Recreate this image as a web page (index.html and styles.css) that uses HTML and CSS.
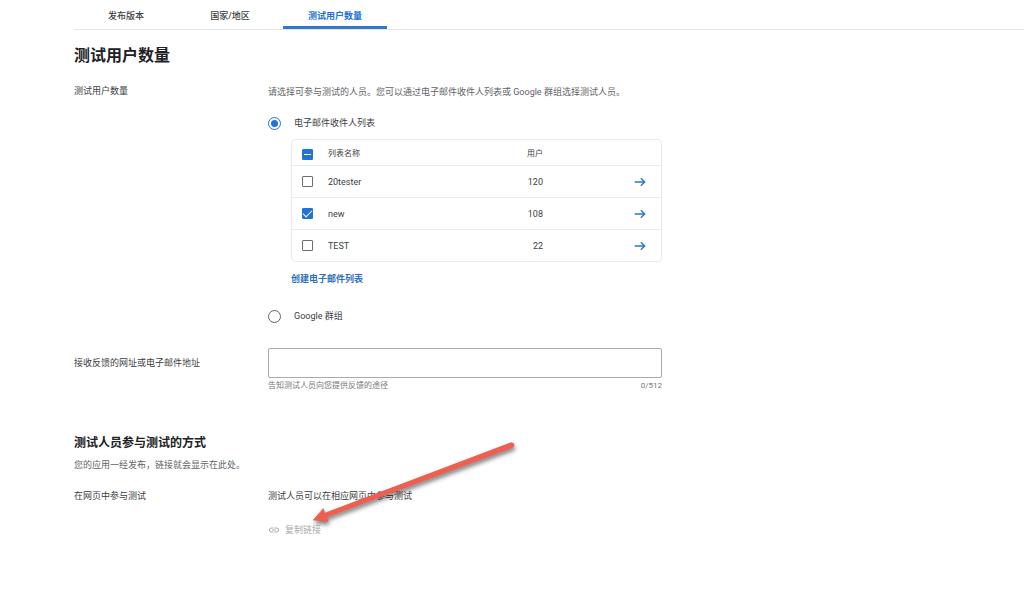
FILE: index.html
```html
<!DOCTYPE html>
<html lang="zh-CN">
<head>
<meta charset="utf-8">
<meta name="viewport" content="width=device-width, initial-scale=1">
<title>测试用户数量</title>
<link rel="stylesheet" href="styles.css">
</head>
<body>
<main class="page">
  <nav class="tabs">
    <a class="tab" href="#releases">发布版本</a>
    <a class="tab" href="#countries">国家/地区</a>
    <a class="tab tab-active" href="#testers" aria-current="page">测试用户数量</a>
  </nav>

  <section class="section" id="testers">
    <h1 class="title">测试用户数量</h1>
    <div class="row">
      <div class="label">测试用户数量</div>
      <div class="field">
        <p class="intro">请选择可参与测试的人员。您可以通过电子邮件收件人列表或 Google 群组选择测试人员。</p>
        <label class="option"><input class="radio" type="radio" name="source" checked>电子邮件收件人列表</label>
        <div class="lists">
          <div class="card">
            <table class="table">
              <thead>
                <tr>
                  <th class="pick"><input class="check check-mixed" type="checkbox" aria-label="全选"></th>
                  <th class="name">列表名称</th>
                  <th class="users">用户</th>
                  <th class="open"></th>
                </tr>
              </thead>
              <tbody>
                <tr>
                  <td class="pick"><input class="check" type="checkbox" id="list-1"></td>
                  <td class="name"><label for="list-1">20tester</label></td>
                  <td class="users">120</td>
                  <td class="open"><a class="go" href="#list-1" aria-label="20tester"><svg class="go-icon" viewBox="0 0 12 12"><path d="M0.7 6H10.6M6.9 2.2L10.7 6L6.9 9.8"/></svg></a></td>
                </tr>
                <tr>
                  <td class="pick"><input class="check" type="checkbox" id="list-2" checked></td>
                  <td class="name"><label for="list-2">new</label></td>
                  <td class="users">108</td>
                  <td class="open"><a class="go" href="#list-2" aria-label="new"><svg class="go-icon" viewBox="0 0 12 12"><path d="M0.7 6H10.6M6.9 2.2L10.7 6L6.9 9.8"/></svg></a></td>
                </tr>
                <tr>
                  <td class="pick"><input class="check" type="checkbox" id="list-3"></td>
                  <td class="name"><label for="list-3">TEST</label></td>
                  <td class="users">22</td>
                  <td class="open"><a class="go" href="#list-3" aria-label="TEST"><svg class="go-icon" viewBox="0 0 12 12"><path d="M0.7 6H10.6M6.9 2.2L10.7 6L6.9 9.8"/></svg></a></td>
                </tr>
              </tbody>
            </table>
          </div>
          <a class="create" href="#create">创建电子邮件列表</a>
        </div>
        <label class="option"><input class="radio" type="radio" name="source">Google 群组</label>
      </div>
    </div>

    <div class="row row-feedback">
      <label class="label label-input" for="feedback">接收反馈的网址或电子邮件地址</label>
      <div class="field">
        <input class="input" type="text" id="feedback" maxlength="512">
        <div class="hint"><span>告知测试人员向您提供反馈的途径</span><span>0/512</span></div>
      </div>
    </div>
  </section>

  <section class="section">
    <h2 class="subtitle">测试人员参与测试的方式</h2>
    <p class="note">您的应用一经发布，链接就会显示在此处。</p>
    <div class="row row-join">
      <div class="label">在网页中参与测试</div>
      <div class="field join">
        <p class="join-text">测试人员可以在相应网页中参与测试</p>
        <button class="copy" type="button" disabled>
          <svg class="copy-icon" viewBox="0 0 24 24"><path d="M3.9 12c0-1.71 1.39-3.1 3.1-3.1h4V7H7c-2.76 0-5 2.24-5 5s2.24 5 5 5h4v-1.9H7c-1.71 0-3.1-1.39-3.1-3.1zM8 13h8v-2H8v2zm9-6h-4v1.9h4c1.71 0 3.1 1.39 3.1 3.1s-1.39 3.1-3.1 3.1h-4V17h4c2.76 0 5-2.24 5-5s-2.24-5-5-5z"/></svg>
          复制链接
        </button>
        <svg class="pointer" viewBox="0 0 212 92" aria-hidden="true"><path d="M4.7 82.2L15.5 70L17 74.7L202.5 4.6Q205.6 3.8 206.3 6.5Q206.7 9 204.5 9.8L18.7 79.4L20.5 84Z"/></svg>
      </div>
    </div>
  </section>
</main>
</body>
</html>
```
FILE: styles.css
```css
* {
  box-sizing: border-box;
}

body {
  margin: 0;
  background: #fff;
  color: #3c4043;
  font-family: Roboto, "Noto Sans CJK SC", sans-serif;
  font-size: 9px;
  line-height: 12px;
}

h1, h2, p {
  margin: 0;
}

a {
  text-decoration: none;
}

.page {
  padding-left: 74px;
}

.tabs {
  display: flex;
  border-bottom: 1px solid #e4e6e8;
}

.tab {
  width: 104px;
  padding: 10px 0 4px;
  border-bottom: 3px solid transparent;
  color: #3c4043;
  font-weight: 500;
  text-align: center;
}

.tab-active {
  margin-left: 1px;
  border-color: #3079cb;
  color: #2273d8;
  font-weight: 700;
}

.section {
  padding-right: 24px;
}

.title {
  padding: 14px 0 17px;
  color: #202124;
  font-size: 16px;
  font-weight: 700;
  line-height: 24px;
}

.row {
  display: grid;
  grid-template-columns: 194px minmax(0, 394px);
}

.intro {
  padding-top: 1px;
  margin-bottom: 18px;
  color: #5f6368;
}

.option {
  display: flex;
  align-items: center;
  gap: 13px;
  line-height: 14px;
}

.radio {
  appearance: none;
  display: grid;
  place-items: center;
  width: 13px;
  height: 13px;
  margin: 0;
  border: 1px solid #5f6368;
  border-radius: 50%;
}

.radio:checked {
  border-color: #2273d8;
}

.radio:checked::before {
  content: "";
  width: 7px;
  height: 7px;
  border-radius: 50%;
  background: #2273d8;
}

.lists {
  padding: 9px 0 23px 23px;
}

.card {
  border: 1px solid #e8eaed;
  border-radius: 4px;
}

.table {
  width: 100%;
  border-collapse: separate;
  border-spacing: 0;
  table-layout: fixed;
}

.table th,
.table td {
  height: 32px;
  padding: 0;
  border-top: 1px solid #e8eaed;
  text-align: left;
  vertical-align: middle;
}

.table th {
  height: 25px;
  padding-top: 3px;
  border-top: 0;
  font-size: 8px;
  font-weight: 400;
}

.table .pick {
  width: 36px;
  padding-left: 10px;
}

.table .users {
  width: 84px;
  text-align: right;
}

.table .open {
  width: 118px;
  padding-right: 15px;
  text-align: right;
}

.check {
  appearance: none;
  display: grid;
  place-items: center;
  width: 11px;
  height: 11px;
  margin: 0;
  border: 1px solid #6b6f73;
  border-radius: 1px;
}

.check:checked,
.check-mixed {
  border-color: #2273d8;
  background: #2273d8;
}

.check-mixed::before {
  content: "";
  width: 7px;
  height: 1px;
  background: #fff;
}

.check:checked::before {
  content: "";
  width: 8px;
  height: 4px;
  margin-bottom: 2px;
  border: solid #fff;
  border-width: 0 0 1px 1px;
  transform: rotate(-45deg);
}

.go {
  display: inline-block;
  vertical-align: middle;
}

.go-icon {
  display: block;
  width: 12px;
  height: 12px;
  fill: none;
  stroke: #2b76cc;
  stroke-width: 1.4;
}

.create {
  display: inline-block;
  margin-top: 10px;
  color: #2b70bd;
  font-weight: 700;
  line-height: 14px;
}

.row-feedback {
  padding-top: 25px;
}

.label-input {
  padding-top: 9px;
}

.input {
  display: block;
  width: 100%;
  height: 30px;
  padding: 0 10px;
  border: 1px solid #a8aaad;
  border-radius: 2px;
  background: #fff;
  color: #3c4043;
  font: inherit;
}

.hint {
  display: flex;
  justify-content: space-between;
  padding-top: 2px;
  color: #75787c;
  font-size: 8px;
}

.subtitle {
  padding: 43px 0 8px;
  color: #202124;
  font-size: 12px;
  font-weight: 700;
  line-height: 16px;
}

.note {
  color: #5f6368;
}

.row-join {
  padding-top: 19px;
}

.join {
  position: relative;
}

.copy {
  display: flex;
  align-items: center;
  gap: 5px;
  margin-top: 22px;
  padding: 0;
  border: 0;
  background: none;
  color: #a9abad;
  font: inherit;
}

.copy-icon {
  width: 12px;
  height: 12px;
  fill: #a9abad;
}

.pointer {
  position: absolute;
  left: 40px;
  top: -52px;
  width: 212px;
  height: 92px;
  overflow: visible;
  fill: #ee5f50;
  filter: drop-shadow(1px 3px 2px rgba(0, 0, 0, 0.5));
  pointer-events: none;
}
```
